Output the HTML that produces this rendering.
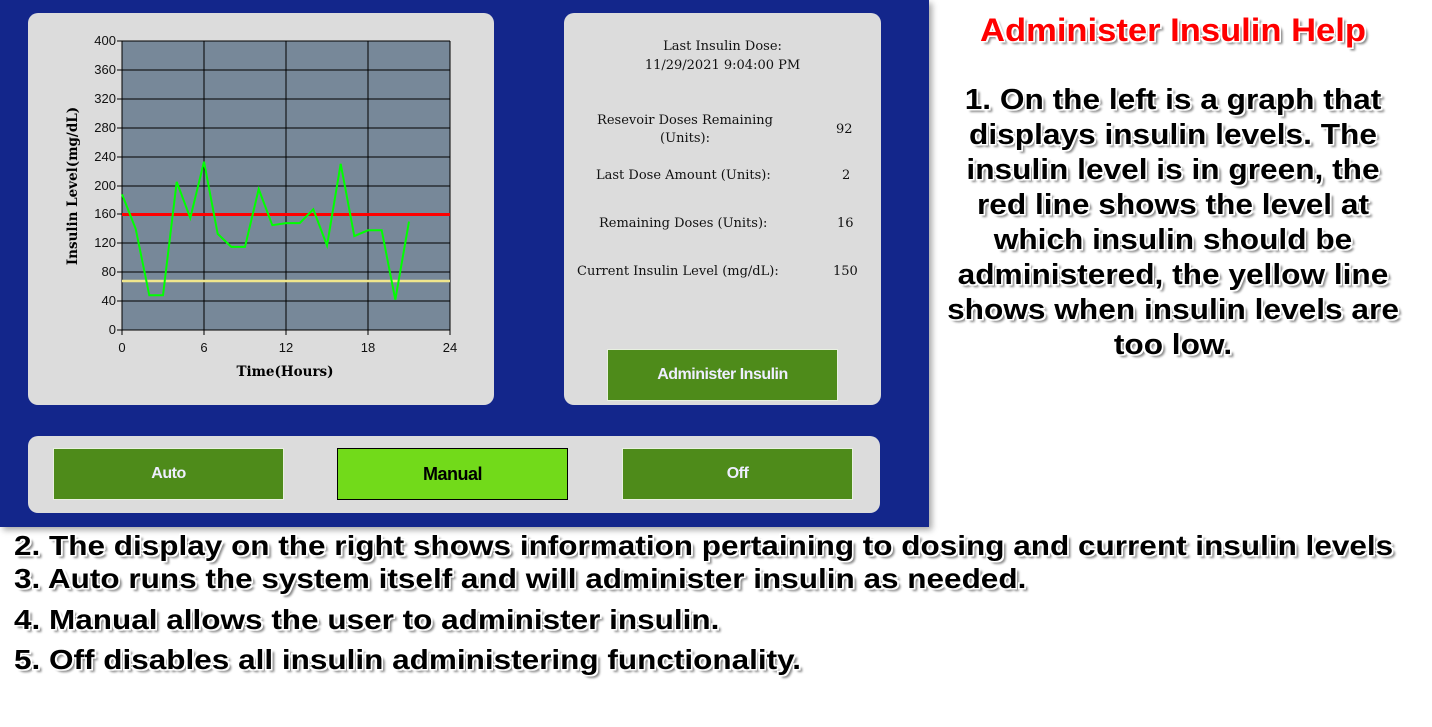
<!DOCTYPE html>
<html><head><meta charset="utf-8"><style>
body{margin:0;width:1432px;height:727px;background:#fff;position:relative;overflow:hidden;font-family:"Liberation Sans",sans-serif}
.blue{position:absolute;left:0;top:0;width:929px;height:527px;background:#13268b;box-shadow:3px 3px 6px rgba(0,0,0,.35)}
.card{position:absolute;background:#dcdcdc;border-radius:10px}
.ser{font-family:"DejaVu Serif","Liberation Serif",serif;font-size:13px;color:#111}
.btn{position:absolute;background:#4e8b1a;border:1px solid #e8f0e0;color:#eef;font-size:16px;font-weight:bold;display:flex;align-items:center;justify-content:center;letter-spacing:-0.5px}
.o{font-weight:bold;color:#000;text-shadow:-1.5px -1.5px 0 #fff,1.5px -1.5px 0 #fff,-1.5px 1.5px 0 #fff,1.5px 1.5px 0 #fff,3px 3px 2px #888}
.help{position:absolute;left:923px;width:500px;text-align:center;font-size:28.5px;line-height:35px;transform:scaleX(1.11);transform-origin:center;white-space:nowrap}
.bl{position:absolute;left:14px;font-size:28px;white-space:nowrap;transform:scaleX(1.125);transform-origin:left}
</style></head><body>
<div class="blue"></div>
<div class="card" style="left:28px;top:13px;width:466px;height:392px"></div>
<svg style="position:absolute;left:0;top:0" width="500" height="400">
<rect x="122" y="41" width="328" height="289" fill="#778899"/>
<g stroke="#000" stroke-width="1">
<line x1="122" y1="41" x2="450" y2="41"/><line x1="122" y1="70" x2="450" y2="70"/><line x1="122" y1="99" x2="450" y2="99"/><line x1="122" y1="128" x2="450" y2="128"/><line x1="122" y1="157" x2="450" y2="157"/><line x1="122" y1="186" x2="450" y2="186"/><line x1="122" y1="214" x2="450" y2="214"/><line x1="122" y1="243" x2="450" y2="243"/><line x1="122" y1="272" x2="450" y2="272"/><line x1="122" y1="301" x2="450" y2="301"/><line x1="117" y1="330" x2="450" y2="330"/>
<line x1="122" y1="41" x2="122" y2="335"/><line x1="204" y1="41" x2="204" y2="335"/><line x1="286" y1="41" x2="286" y2="335"/><line x1="368" y1="41" x2="368" y2="335"/><line x1="450" y1="41" x2="450" y2="335"/>
<line x1="117" y1="41" x2="122" y2="41"/><line x1="117" y1="70" x2="122" y2="70"/><line x1="117" y1="99" x2="122" y2="99"/><line x1="117" y1="128" x2="122" y2="128"/><line x1="117" y1="157" x2="122" y2="157"/><line x1="117" y1="186" x2="122" y2="186"/><line x1="117" y1="214" x2="122" y2="214"/><line x1="117" y1="243" x2="122" y2="243"/><line x1="117" y1="272" x2="122" y2="272"/><line x1="117" y1="301" x2="122" y2="301"/>
</g>
<line x1="122" y1="214.5" x2="450" y2="214.5" stroke="#f00" stroke-width="3"/>
<line x1="122" y1="281" x2="450" y2="281" stroke="#f0e68c" stroke-width="2.5"/>
<polyline fill="none" stroke="#00ff00" stroke-width="2" points="122,194.2 135.7,228.9 149.3,295.3 163,295.3 176.7,181.9 190.3,218 204,161.7 217.7,233.9 231.3,246.9 245,246.9 258.7,189.1 272.3,225.2 286,223.1 299.7,223.1 313.3,209.3 327,245.5 340.7,163.8 354.3,236.1 368,230.3 381.7,230.3 395.3,299.7 409,221.6"/>
<g font-family="Liberation Sans" font-size="13" fill="#111" text-anchor="end">
<text x="116" y="45">400</text><text x="116" y="74">360</text><text x="116" y="103">320</text><text x="116" y="132">280</text><text x="116" y="161">240</text><text x="116" y="190">200</text><text x="116" y="218">160</text><text x="116" y="247">120</text><text x="116" y="276">80</text><text x="116" y="305">40</text><text x="116" y="334">0</text>
</g>
<g font-family="Liberation Sans" font-size="13" fill="#111" text-anchor="middle">
<text x="122" y="352">0</text><text x="204" y="352">6</text><text x="286" y="352">12</text><text x="368" y="352">18</text><text x="450" y="352">24</text>
</g>
<text x="285" y="376" text-anchor="middle" font-family="DejaVu Serif" font-weight="bold" font-size="13.5">Time(Hours)</text>
<text transform="translate(77,186) rotate(-90)" text-anchor="middle" font-family="DejaVu Serif" font-weight="bold" font-size="13.5">Insulin Level(mg/dL)</text>
</svg>
<div class="card" style="left:564px;top:13px;width:317px;height:392px"></div>
<div class="ser" style="position:absolute;left:564px;top:37px;width:317px;text-align:center;line-height:19px">Last Insulin Dose:<br>11/29/2021 9:04:00 PM</div>
<div class="ser" style="position:absolute;left:580px;top:112px;width:210px;text-align:center;line-height:18px">Resevoir Doses Remaining<br>(Units):</div>
<div class="ser" style="position:absolute;left:836px;top:122px">92</div>
<div class="ser" style="position:absolute;left:596px;top:168px">Last Dose Amount (Units):</div>
<div class="ser" style="position:absolute;left:842px;top:168px">2</div>
<div class="ser" style="position:absolute;left:599px;top:216px">Remaining Doses (Units):</div>
<div class="ser" style="position:absolute;left:837px;top:216px">16</div>
<div class="ser" style="position:absolute;left:577px;top:264px">Current Insulin Level (mg/dL):</div>
<div class="ser" style="position:absolute;left:833px;top:264px">150</div>
<div class="btn" style="left:607px;top:349px;width:229px;height:50px">Administer Insulin</div>
<div class="card" style="left:28px;top:436px;width:852px;height:77px"></div>
<div class="btn" style="left:53px;top:448px;width:229px;height:50px">Auto</div>
<div class="btn" style="left:337px;top:448px;width:229px;height:50px;background:#72da1a;border-color:#000;color:#000;font-size:18px">Manual</div>
<div class="btn" style="left:622px;top:448px;width:229px;height:50px">Off</div>
<div class="o help" style="top:13px;color:#f00;font-size:32px;transform:scaleX(1.08)">Administer Insulin Help</div>
<div class="o help" style="top:83px">1. On the left is a graph that<br>displays insulin levels. The<br>insulin level is in green, the<br>red line shows the level at<br>which insulin should be<br>administered, the yellow line<br>shows when insulin levels are<br>too low.</div>
<div class="o bl" style="top:530px">2. The display on the right shows information pertaining to dosing and current insulin levels</div>
<div class="o bl" style="top:563px">3. Auto runs the system itself and will administer insulin as needed.</div>
<div class="o bl" style="top:604px">4. Manual allows the user to administer insulin.</div>
<div class="o bl" style="top:644px">5. Off disables all insulin administering functionality.</div>
</body></html>
